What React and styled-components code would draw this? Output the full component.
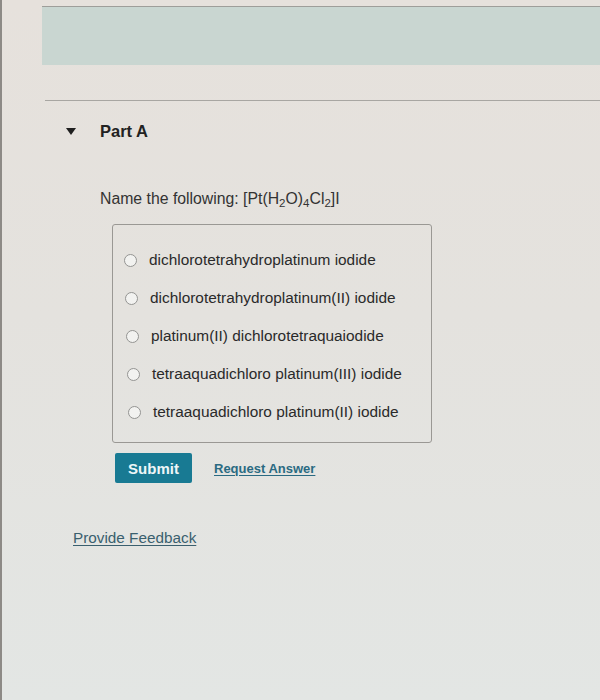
import React from 'react'
import styled, { createGlobalStyle } from 'styled-components'

const Global = createGlobalStyle`
  html, body {
    margin: 0;
    padding: 0;
    background: #e4e2de;
  }
  body {
    font-family: "Liberation Sans", Arial, sans-serif;
  }
`

const Page = styled.div`
  width: 600px;
  height: 700px;
  box-sizing: border-box;
  border-left: 2px solid #8d8a86;
  background: linear-gradient(180deg, #e6e1dc 0%, #e4e2de 45%, #e3e6e4 100%);
  overflow: hidden;
  padding-top: 6px;
  color: #2b2b2b;
`

const Banner = styled.div`
  margin-left: 40px;
  height: 58px;
  border-top: 1px solid #9e9e9a;
  background: #c9d6d1;
`

const Divider = styled.div`
  margin: 35px 0 0 43px;
  border-top: 1px solid #a8a6a2;
`

const PartHeader = styled.div`
  display: flex;
  align-items: center;
  gap: 24px;
  padding-left: 64px;
  margin-top: 20px;
  height: 20px;
`

const Caret = styled.span`
  width: 0;
  height: 0;
  border-left: 5px solid transparent;
  border-right: 5px solid transparent;
  border-top: 7px solid #1f1f1f;
`

const PartTitle = styled.h2`
  margin: 0;
  font-size: 16.5px;
  font-weight: 700;
  color: #222;
`

const Question = styled.p`
  margin: 49px 0 0 98px;
  font-size: 15.8px;
  line-height: 18px;
  color: #333;

  sub {
    font-size: 11.5px;
    vertical-align: -3px;
    line-height: 0;
  }
`

const Choices = styled.div`
  margin: 16px 0 0 110px;
  width: 320px;
  height: 219px;
  box-sizing: border-box;
  border: 1px solid #9a9894;
  border-radius: 3px;
  padding: 26px 0 0 11px;
  display: flex;
  flex-direction: column;
  gap: 20px;
`

const Choice = styled.label`
  display: flex;
  align-items: center;
  gap: 12px;
  height: 18px;
  padding-left: ${p => p.$shift}px;
  font-size: 15.4px;
  color: #2a2a2a;
`

const Radio = styled.span`
  width: 11px;
  height: 11px;
  border: 1.5px solid #949492;
  border-radius: 50%;
  background: #f2f2f0;
  flex: none;
`

const Actions = styled.div`
  display: flex;
  align-items: center;
  gap: 22px;
  margin: 10px 0 0 113px;
`

const SubmitButton = styled.button`
  width: 77px;
  height: 30px;
  border: none;
  border-radius: 2px;
  background: #187a93;
  color: #eef6f8;
  font-family: "Liberation Sans", Arial, sans-serif;
  font-size: 15px;
  font-weight: 700;
  padding: 0;
`

const LinkText = styled.a`
  color: ${p => p.$color || '#2a6a82'};
  font-size: ${p => p.$size || 13}px;
  font-weight: ${p => (p.$bold ? 700 : 400)};
  text-decoration: underline;
  text-underline-offset: 2px;
`

const Feedback = styled.div`
  margin: 46px 0 0 71px;
`

const options = [
  'dichlorotetrahydroplatinum iodide',
  'dichlorotetrahydroplatinum(II) iodide',
  'platinum(II) dichlorotetraquaiodide',
  'tetraaquadichloro platinum(III) iodide',
  'tetraaquadichloro platinum(II) iodide',
]

export default function App() {
  return (
    <Page>
      <Global />
      <Banner />
      <Divider />
      <PartHeader>
        <Caret />
        <PartTitle>Part A</PartTitle>
      </PartHeader>
      <Question>
        Name the following: [Pt(H<sub>2</sub>O)<sub>4</sub>Cl<sub>2</sub>]I
      </Question>
      <Choices>
        {options.map((o, i) => (
          <Choice key={o} $shift={i}>
            <Radio />
            {o}
          </Choice>
        ))}
      </Choices>
      <Actions>
        <SubmitButton>Submit</SubmitButton>
        <LinkText href="#" $bold>Request Answer</LinkText>
      </Actions>
      <Feedback>
        <LinkText href="#" $size={15.3} $color="#3a5f6e">Provide Feedback</LinkText>
      </Feedback>
    </Page>
  )
}
